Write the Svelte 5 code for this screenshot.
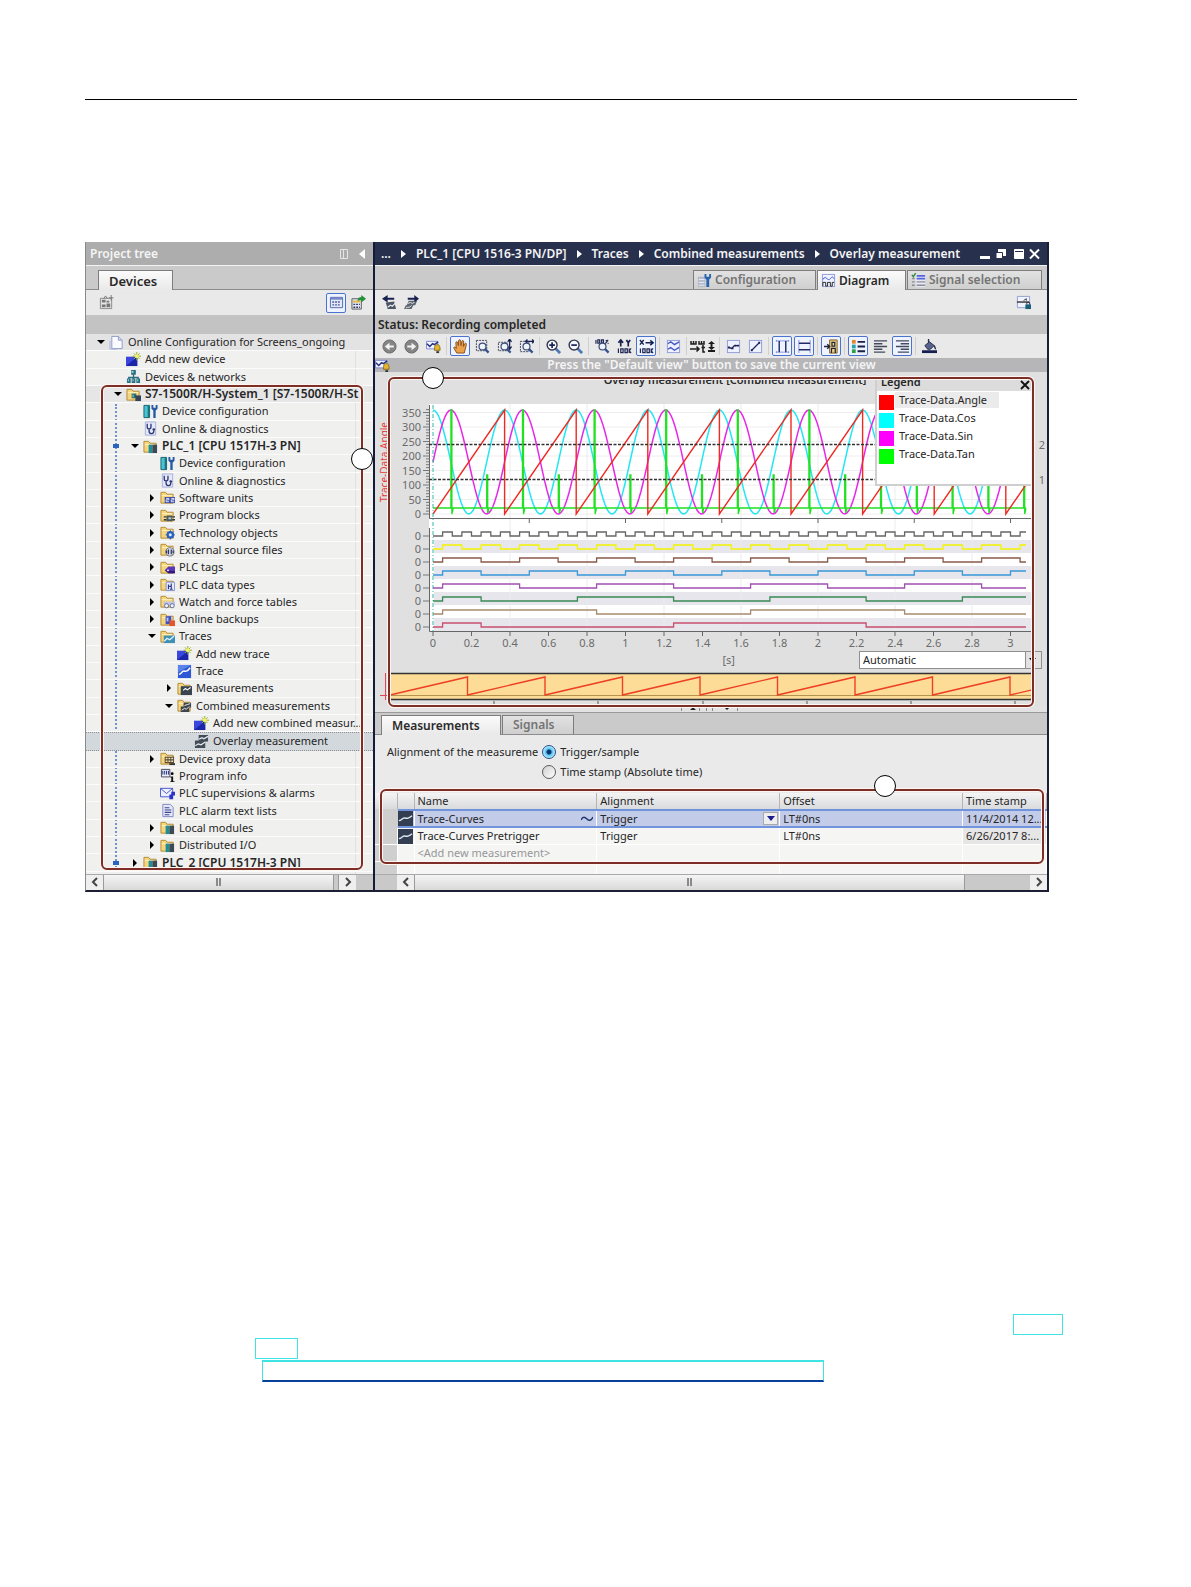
<script>
    let alignment = 'trigger';
    let selectedRow = 'Overlay measurement';
    let range = 'Automatic';

    const folder = '<path d="M1 2.5h5l1.500 2H14V14H1z" fill="#f6d67c" stroke="#b28a35"/><path d="M2 6h11" stroke="#fff3c4"/>';
    const wave = '<path d="M6.500 10l2.500-2 2 1.500L14.500 7" fill="none" stroke="#fff" stroke-width="1.200"/>';
    const lens = '<path d="M10.500 10.500l4 4" stroke="#35538c" stroke-width="2.400"/><circle cx="8" cy="8" r="3.700" fill="#eef4fb" stroke="#3c4d77" stroke-width="1.300"/>';
    const frame = '<rect x="1.500" y="1.500" width="13" height="13" fill="#eef1ff" stroke="#8f9cd8"/>';

    const icons = {
        project: '<path d="M3 1.500h7l4 4v9H3z" fill="#fafbff" stroke="#8b97c9"/><path d="M10 1.500v4h4" fill="#cfd7f5" stroke="#8b97c9"/><path d="M1 6v9h8" fill="none" stroke="#a8b2dc"/>',
        add: '<path d="M0 5h12v10H0z" fill="#3a46dc"/><path d="M0 15L12 5v10z" fill="#1a25a8"/><path d="M11.500 0v9M7 4.500h9M8.500 1.500l6 6M14.500 1.500l-6 6" stroke="#8fae1c"/><circle cx="11.500" cy="4.500" r="2" fill="#f4f06a"/>',
        network: '<path d="M8 5v4M3 12V9h10v3M8 9v3" fill="none" stroke="#2d6f7e" stroke-width="1.500"/><path d="M5.500 1h5v5h-5zM1 10h4v5H1zM6 10h4v5H6zM11 10h4v5h-4z" fill="#2c7181"/><path d="M6 2h2v2H6zM2 11h1v2H2zM7 11h1v2H7zM12 11h1v2h-1z" fill="#9fdce6"/>',
        system: folder + '<path d="M6 7h5v5H6z" fill="#2b6d74"/><path d="M10 9h6v6h-6z" fill="#344356"/><path d="M7 8h1v3H7z" fill="#8fe0e6"/>',
        config: '<path d="M1 1.500h6v13H1z" fill="#47c3d2" stroke="#17616d"/><path d="M5 2h2v12H5z" fill="#1b7382"/><path d="M9 1v4l2 2v8h2.500V7L15.500 5V1h-2v3h-2.500V1z" fill="#2758a4"/>',
        diag: '<path d="M2.500 1h11v14h-11z" fill="#e4e8fa" stroke="#a6afd8"/><path d="M4.500 3v3.500a2 2 0 004 0V3M6.500 8.500V11a2.500 2.500 0 005 0v-1" fill="none" stroke="#2c3672" stroke-width="1.400"/><circle cx="11.500" cy="9" r="1.400" fill="#2c3672"/>',
        plc: folder + '<path d="M6 6h4v9H6z" fill="#1c8f9b"/><path d="M10 6h5v9h-5z" fill="#3d4a55"/>',
        units: folder + '<path d="M5 7.500h11V14H5z" fill="#3e4ea8"/><path d="M6.500 9h3v1.500h-3v2h3M12 9h3v1.500h-3v2h3" fill="none" stroke="#dfe5ff"/>',
        blocks: folder + '<path d="M7 8h6v6H7z" fill="#47585f"/><path d="M4 9.500h3M4 12.500h3M13 9.500h3M13 12.500h3" stroke="#2e3b40" stroke-width="1.500"/><path d="M9 10h3v2H9z" fill="#c0d2d6"/>',
        tech: folder + '<circle cx="11" cy="10.500" r="3" fill="#7fb1ee" stroke="#2b5fc0" stroke-width="2"/><path d="M11 5.500v10M6 10.500h10M7.500 7l7 7M14.500 7l-7 7" stroke="#2b5fc0"/><circle cx="11" cy="10.500" r="1.500" fill="#e8f1ff"/>',
        source: folder + '<circle cx="10.500" cy="10.500" r="4.500" fill="#d7dceb" stroke="#67708f"/><path d="M9 8v5M12 8v5M7 9v3M14 9v3" stroke="#2c3258" stroke-width="1.300"/>',
        tags: folder + '<path d="M5 11l4-4h7v7H9z" fill="#5a37b8"/><path d="M5 11l4 3h7v-2z" fill="#33197c"/><circle cx="8.500" cy="11" r="1" fill="#fff"/>',
        types: folder + '<path d="M6.500 5.500h9v9h-9z" fill="#e7eafb" stroke="#8590cd"/><path d="M9 8v5M9 10h3M12 7v6M10.500 13h3" stroke="#2b3a8f" stroke-width="1.200"/>',
        watch: folder + '<path d="M4 8h12v4H4z" fill="#bfc5e4"/><circle cx="7" cy="12.500" r="2.200" fill="#eef1ff" stroke="#626a95"/><circle cx="13" cy="12.500" r="2.200" fill="#eef1ff" stroke="#626a95"/>',
        backups: folder + '<path d="M6 4.500h6V13H6z" fill="#3c51cc"/><path d="M7 6h2v4H7z" fill="#b8c4ff"/><path d="M10 9h6v6h-6z" fill="#e4562b"/>',
        traces: folder + '<path d="M4 7h12v8H4z" fill="#3f8fb5"/><path d="M4.500 13l3-3 3 1.500 4.500-4" fill="none" stroke="#d9f3ff" stroke-width="1.500"/>',
        trace: '<path d="M1 1h14v14H1z" fill="#2e57d6"/><path d="M1 1h14L1 9z" fill="#5c82ec"/><path d="M2 11c3 0 3-4 5.500-3.500S11 8 14 4" fill="none" stroke="#fff" stroke-width="1.500"/>',
        measure: folder + '<path d="M4 5.500h12V15H4z" fill="#39444f"/>' + wave,
        combined: folder + '<path d="M7 5h8v5H7zM4 9h9v6H4z" fill="#3d4650"/><path d="M5 13l3-2 2 1 3-3M8 8l3-1 3-1" fill="none" stroke="#f2f2f2"/>',
        overlay: '<path d="M5 1h10v7H5zM1 7h11v8H1z" fill="#434d57"/><path d="M1.500 12.500l3-2 3 1L12 8.500M5.500 5.500l3-1.500 2 1L15 2.500" fill="none" stroke="#e6ebef" stroke-width="1.300"/>',
        curve: '<path d="M0 0h16v16H0z" fill="#333e52"/><path d="M1 10c3 1 3-3 6-2.500S11 8 15 5" fill="none" stroke="#dfe6ee" stroke-width="1.500"/>',
        proxy: folder + '<path d="M5 6h10v7H5z" fill="#5b4a32"/><path d="M6 8h2M9 8h2M12 8h2M6 11h2M9 11h2M12 11h2" stroke="#f1e2b8" stroke-width="1.500"/><path d="M10 13h6v2h-6z" fill="#333"/>',
        info: '<path d="M1.500 1.500h9v8h-9z" fill="#e9eefc" stroke="#445"/><path d="M3 3v4M5 3v4M7 3v4M9 3v4" stroke="#1c2b7a"/><circle cx="13" cy="6" r="1.500"/><path d="M11 9h3v5h1.500v1H11v-1h1v-4h-1z" fill="#111"/>',
        alarms: '<path d="M.5 2.500h13v9H.5z" fill="#eef1ff" stroke="#4653cf"/><path d="M.5 2.500L7 8l6.500-5.500" fill="none" stroke="#4653cf"/><path d="M12 6h4v4h-4zM10 9h4v5h-4z" fill="#2733c9"/>',
        textlist: '<path d="M3 1.500h8l3 3v10H3z" fill="#e4e8fb" stroke="#7d88c6"/><path d="M5 5h5M5 7.500h7M5 10h7M5 12.500h5" stroke="#3a4387" stroke-width="1.200"/>',
        sheet: '<path d="M1.500 3.500h12v11h-12z" fill="#e8e8e8" stroke="#868686"/><path d="M3 5h4v3H3zM8 9h4v4H8zM3 10h4v3H3zM8 6h3v2H8z" fill="#777"/><path d="M5 4l2-3 2 3M13 0v6M10.500 3h5" fill="none" stroke="#777"/>',
        grid: '<path d="M1.500 2.500h13v11h-13z" fill="#e3e8fb" stroke="#5468ac"/><path d="M2 4h12" stroke="#7488ca" stroke-width="2"/><path d="M3.500 7.500h9M3.500 10.500h9" stroke="#4d5c94" stroke-width="1.500" stroke-dasharray="2 1"/>',
        gridOut: '<path d="M1 4h10v11H1z" fill="#e9e9f3" stroke="#555"/><path d="M2 7h8" stroke="#e5b43f" stroke-width="2"/><path d="M2.500 10h7M2.500 13h7" stroke="#2b3c6e" stroke-width="1.500" stroke-dasharray="2 1"/><path d="M7 6c0-3 2-4 4-4V0l5 4-5 4V5.500C9 5.500 8 6 7 6z" fill="#26913a"/>',
        importT: '<path d="M4 8l9-1 2 8H6z" fill="#4b5563"/><path d="M6 13l3-2 2 1 3-3" fill="none" stroke="#e6ebef" stroke-width="1.300"/><path d="M13 5V3H6V0L0 4l6 4V5z" fill="#18214f"/>',
        exportT: '<path d="M5 6h9l-2 5H3zM2 11h8l-2 4H0z" fill="#5b6470"/><path d="M4 9l3-1 2 1 3-2M2 14l2-1 2 0 2-2" fill="none" stroke="#eee"/><path d="M4 5V3h7V0l5 4-5 4V5z" fill="#18214f"/>',
        layout: '<path d="M1.500 1.500h13v12h-13z" fill="#f1f4ff" stroke="#8d9ed2"/><path d="M1 7.500h13" stroke="#333" stroke-width="1.500"/><path d="M8 6l3-2v2" stroke="#333" fill="none"/><path d="M10 10h6v5h-6z" fill="#19607d"/><path d="M11.500 10V8h3v2" fill="none" stroke="#333"/>',
        tabConfig: '<path d="M1 4h8v11H1z" fill="#b3bac5"/><path d="M2 7h6M2 10h6M2 13h6" stroke="#eef"/><path d="M8 1v4l2 2v8h3V7l2-2V1h-2v3h-3V1z" fill="#2764b0"/>',
        tabDiagram: frame + '<path d="M2 7c3-6 5 3 8-1s3 0 4 0" fill="none" stroke="#3c4fd0"/><path d="M2 14V10h3v4h2v-4h3v4h2v-4h2" fill="none" stroke="#222"/>',
        tabSignal: '<path d="M5 2h10v13H5z" fill="#e8e8f4"/><path d="M6 3h9M6 6h9" stroke="#5563dd" stroke-width="2"/><path d="M6 9.500h9M6 13h9M1 6h3M1 9.500h3M1 13h3" stroke="#8c8c94" stroke-width="1.500"/><path d="M1 2l1.500 2L5 0" fill="none" stroke="#2f8b3a" stroke-width="1.500"/>',
        back: '<circle cx="8" cy="8" r="7" fill="#858585" stroke="#6a6a6a"/><path d="M12.500 7v2H8v3L3 8l5-4v3z" fill="#f4f4f4"/>',
        forward: '<circle cx="8" cy="8" r="7" fill="#858585" stroke="#6a6a6a"/><path d="M3.500 7v2H8v3l5-4-5-4v3z" fill="#f4f4f4"/>',
        defaultView: '<path d="M.5 2.500h12v8H.5z" fill="#f2f4ff" stroke="#7b8ad8"/><path d="M1 5l3 3 3-3 2 1 4-3" fill="none" stroke="#26327c" stroke-width="1.600"/><path d="M9 12c0-5 1-6 3-6s3 1 3 6z" fill="#e6b62e" stroke="#8a6a14"/><path d="M11 13h3v2h-3z" fill="#333"/>',
        hand: '<path d="M4 15L.8 9.500c0-1.500 1.500-1.500 2.700.5L3 4c0-1.500 1.800-1.500 2 0l.7 3L6 2c0-1.600 2-1.600 2.200 0l.3 5 1-4.500c.4-1.500 2-1 1.900.4L11 8l1.500-3c.8-1.200 2.200-.4 1.800.9L12 15z" fill="#eba14a" stroke="#7b4312" stroke-width=".9"/>',
        zoomSel: '<path d="M1.500 1.500h11v11h-11z" fill="none" stroke="#3a3f5c" stroke-dasharray="2 1"/>' + lens,
        zoomY: '<path d="M1.500 3.500h9v9h-9z" fill="none" stroke="#3a3f5c" stroke-dasharray="2 1"/><path d="M13.500 0v11M11.500 3l2-3 2 3M11.500 8l2 3 2-3" fill="none" stroke="#18214f" stroke-width="1.300"/>' + lens,
        zoomX: '<path d="M1.500 2.500h9v11h-9z" fill="none" stroke="#3a3f5c" stroke-dasharray="2 1"/><path d="M7 2.500h9M9 .5l-2 2 2 2M14 .5l2 2-2 2" fill="none" stroke="#18214f" stroke-width="1.300"/>' + lens,
        zoomIn: '<path d="M10 10l5 5" stroke="#4c79b5" stroke-width="3"/><circle cx="6.500" cy="6.500" r="5.300" fill="#f5f8ff" stroke="#33384f" stroke-width="1.500"/><path d="M3.500 6.500h6M6.500 3.500v6" stroke="#1a2050" stroke-width="1.800"/>',
        zoomOut: '<path d="M10 10l5 5" stroke="#4c79b5" stroke-width="3"/><circle cx="6.500" cy="6.500" r="5.300" fill="#f5f8ff" stroke="#33384f" stroke-width="1.500"/><path d="M3.500 6.500h6" stroke="#1a2050" stroke-width="1.800"/>',
        zoomAll: '<path d="M1 1v4M3 1h2v3.500H3zM7 1h2v3.500H7zM11 5l3-4M12 1v1M14 4v1" fill="none" stroke="#222a55" stroke-width="1.300"/>' + lens,
        scaleY: '<path d="M4 8V1M1.500 4L4 1l2.500 3M10 1l2 3 2-3M12 4v4" fill="none" stroke="#18214f" stroke-width="1.800"/><path d="M1.500 10v5M4 10.500h2.500v4H4zM8.500 10.500H11v4H8.500zM13 10v5M15 10l-2 2.500 2 2.500" fill="none" stroke="#222a55" stroke-width="1.300"/>',
        scaleX: '<path d="M1 1l4 5M5 1L1 6M7 4h8M12 1.500L15 4l-3 2.500" fill="none" stroke="#18214f" stroke-width="1.500"/><path d="M1.500 10v5M4 10.500h2.500v4H4zM8.500 10.500H11v4H8.500zM13 10v5M15 10l-2 2.500 2 2.500" fill="none" stroke="#222a55" stroke-width="1.300"/>',
        waves: frame + '<path d="M2 5l3-2 4 3 5-3M2 11l3-2 4 3 5-3" fill="none" stroke="#4355c5" stroke-width="1.400"/>',
        points: frame + '<path d="M3 9l3 1 3-3 4 0" fill="none" stroke="#1c2458" stroke-width="1.400"/><path d="M2 8h2v2H2zM6 9h2v2H6zM9 6h2v2H9zM12 6h2v2h-2z" fill="#1c2458"/>',
        line: frame + '<path d="M4 12l8-8" stroke="#1c2458" stroke-width="1.400"/><path d="M3 11h2v2H3zM11 3h2v2h-2z" fill="#1c2458"/>',
        vert: '<path d="M1 2h14M1 14h14" stroke="#8893d8"/><path d="M4.500 2v12M11.500 2v12" stroke="#1f2a66" stroke-width="1.500"/><path d="M1.500 1v2M14.500 1v2M1.500 13v2M14.500 13v2" stroke="#8893d8"/>',
        horiz: '<path d="M2 1v14M14 1v14" stroke="#8893d8"/><path d="M2 4.500h12M2 11.500h12" stroke="#1f2a66" stroke-width="1.500"/>',
        cursors: '<path d="M6 1h8v14H6z" fill="#ead08a" stroke="#7c5c1c"/><path d="M8.500 3.500h3v4h-3zM8 15v-5h4v5" fill="none" stroke="#20243f" stroke-width="1.300"/><path d="M0 8h6M3.500 5.500L6 8l-2.500 2.500" fill="none" stroke="#20243f" stroke-width="1.500"/>',
        legend: '<path d="M1 1h4v4H1z" fill="#e2872a"/><path d="M1 6h4v4H1z" fill="#26a3a8"/><path d="M1 11h4v4H1z" fill="#2d9e45"/><path d="M7 3h8M7 8h8M7 13h8" stroke="#1a2146" stroke-width="2"/>',
        left: '<path d="M1 2h14M1 5h9M1 8h14M1 11h9M1 14h12" stroke="#444a5e" stroke-width="1.500"/>',
        right: '<path d="M1 2h14M6 5h9M1 8h14M6 11h9M3 14h12" stroke="#444a5e" stroke-width="1.500"/>',
        fill: '<path d="M0 12h16v3H0z" fill="#17204e"/><path d="M3 7l5-4 5 4-4 4H6z" fill="#59628a" stroke="#2a3050"/><path d="M7 4V0M13 7l1.500 4" stroke="#2a3050" stroke-width="1.500"/>',
    };

    const tree = [
        { text: 'Online Configuration for Screens_ongoing', level: 0, icon: 'project', open: true, top: true },
        { text: 'Add new device', level: 1, icon: 'add' },
        { text: 'Devices & networks', level: 1, icon: 'network' },
        { text: 'S7-1500R/H-System_1 [S7-1500R/H-St', level: 1, icon: 'system', open: true, bold: true },
        { text: 'Device configuration', level: 2, icon: 'config' },
        { text: 'Online & diagnostics', level: 2, icon: 'diag' },
        { text: 'PLC_1 [CPU 1517H-3 PN]', level: 2, icon: 'plc', open: true, bold: true, online: true },
        { text: 'Device configuration', level: 3, icon: 'config' },
        { text: 'Online & diagnostics', level: 3, icon: 'diag' },
        { text: 'Software units', level: 3, icon: 'units', open: false },
        { text: 'Program blocks', level: 3, icon: 'blocks', open: false },
        { text: 'Technology objects', level: 3, icon: 'tech', open: false },
        { text: 'External source files', level: 3, icon: 'source', open: false },
        { text: 'PLC tags', level: 3, icon: 'tags', open: false },
        { text: 'PLC data types', level: 3, icon: 'types', open: false },
        { text: 'Watch and force tables', level: 3, icon: 'watch', open: false },
        { text: 'Online backups', level: 3, icon: 'backups', open: false },
        { text: 'Traces', level: 3, icon: 'traces', open: true },
        { text: 'Add new trace', level: 4, icon: 'add' },
        { text: 'Trace', level: 4, icon: 'trace' },
        { text: 'Measurements', level: 4, icon: 'measure', open: false },
        { text: 'Combined measurements', level: 4, icon: 'combined', open: true },
        { text: 'Add new combined measur...', level: 5, icon: 'add' },
        { text: 'Overlay measurement', level: 5, icon: 'overlay' },
        { text: 'Device proxy data', level: 3, icon: 'proxy', open: false },
        { text: 'Program info', level: 3, icon: 'info' },
        { text: 'PLC supervisions & alarms', level: 3, icon: 'alarms' },
        { text: 'PLC alarm text lists', level: 3, icon: 'textlist' },
        { text: 'Local modules', level: 3, icon: 'plc', open: false },
        { text: 'Distributed I/O', level: 3, icon: 'plc', open: false },
        { text: 'PLC_2 [CPU 1517H-3 PN]', level: 2, icon: 'plc', open: false, bold: true, online: true },
    ];

    // a group is drawn between two separators
    const tools = [
        [{ icon: 'back' }, { icon: 'forward' }, { icon: 'defaultView' }],
        [{ icon: 'hand', on: true }, { icon: 'zoomSel' }, { icon: 'zoomY' }, { icon: 'zoomX' }],
        [{ icon: 'zoomIn' }, { icon: 'zoomOut' }],
        [{ icon: 'zoomAll' }, { icon: 'scaleY' }, { icon: 'scaleX', on: true }],
        [{ icon: 'waves' }],
        [{ icon: 'timeScale' }],
        [{ icon: 'points' }, { icon: 'line' }],
        [{ icon: 'vert', on: true }, { icon: 'horiz', on: true }],
        [{ icon: 'cursors', on: true }],
        [{ icon: 'legend', on: true }, { icon: 'left' }, { icon: 'right', on: true }],
        [{ icon: 'fill' }],
    ];

    const path = ['...', 'PLC_1 [CPU 1516-3 PN/DP]', 'Traces', 'Combined measurements', 'Overlay measurement'];

    const legend = [
        { name: 'Trace-Data.Angle', color: '#ff0000' },
        { name: 'Trace-Data.Cos', color: '#00ffff' },
        { name: 'Trace-Data.Sin', color: '#ff00ff' },
        { name: 'Trace-Data.Tan', color: '#00ff00' },
    ];

    const rows = [
        { name: 'Trace-Curves', offset: 'LT#0ns', stamp: '11/4/2014 12...' },
        { name: 'Trace-Curves Pretrigger', offset: 'LT#0ns', stamp: '6/26/2017 8:...' },
    ];

    // chart geometry
    const x0 = 433;
    const xEnd = 1026;
    const y0 = 514;
    const yTop = 410;
    const period = 71.6;
    const sx = (s) => x0 + s * 192.5;
    const sy = (v) => y0 - v * 0.29;

    const yTicks = [0, 50, 100, 150, 200, 250, 300, 350];
    const minor = Array.from({ length: 37 }, (_, i) => i * 10);
    const xTicks = Array.from({ length: 16 }, (_, i) => i / 5);
    const periods = Array.from({ length: 9 }, (_, i) => i);

    function sine(phase) {
        const mid = (y0 + yTop) / 2;
        const amp = (y0 - yTop) / 2;
        let d = '';
        for (let x = x0; x <= xEnd; x += 2) {
            const y = mid - amp * Math.sin(((x - x0) / period) * 2 * Math.PI + phase);
            d += `${d ? 'L' : 'M'}${x} ${y.toFixed(1)}`;
        }
        return d;
    }

    function saw(start, step, end, low, high) {
        let d = `M${start} ${low}`;
        let x = start;
        while (x + step < end) {
            x += step;
            d += `L${x} ${high}V${low}`;
        }
        const last = low - ((end - x) / step) * (low - high);
        return d + `L${end} ${last}`;
    }

    function tan() {
        const base = 508;
        let d = `M${x0} ${base}`;
        for (const p of periods) {
            const a = x0 + p * period + period / 4;
            const b = a + period / 2;
            if (a < xEnd) d += `H${a}V${yTop}h1V${y0}L${a + 2} ${base + 2}V${base}`;
            if (b < xEnd) d += `H${b}V475h1V${y0 - 1}L${b + 2} ${base + 2}V${base}`;
        }
        return d + `H${xEnd}`;
    }

    const every = (step) => {
        const times = [];
        for (let t = 0.05; t < 3.07; t += step) times.push(t);
        return times;
    };

    const bits = [
        { color: '#666666', times: every(0.05) },
        { color: '#f4f400', times: every(0.1) },
        { color: '#8a5a4a', times: every(0.2) },
        { color: '#3a98d8', times: [0.05, 0.25, 0.5, 0.75, 1, 1.25, 1.5, 1.75, 2, 2.25, 2.5, 2.75, 3] },
        { color: '#a050b0', times: every(0.4) },
        { color: '#3a8a55', times: [0.05, 0.25, 0.75, 1.25, 1.75, 2.25, 2.75] },
        { color: '#a88a6c', times: every(0.8) },
        { color: '#c8506e', times: [0.05, 0.25, 1.25, 2.25] },
    ];

    function bitPath(times, i) {
        const low = 536 + i * 13;
        let d = `M${x0} ${low}`;
        times.forEach((t, n) => {
            d += `H${sx(t).toFixed(1)}V${n % 2 ? low : low - 4}`;
        });
        return d + `H${xEnd}`;
    }
</script>

{#snippet icon(name)}
    <svg class="icon" viewBox="0 0 16 16" aria-hidden="true">{@html icons[name]}</svg>
{/snippet}

{#snippet chevron(dir)}
    <svg class="chevron" viewBox="0 0 8 10" aria-hidden="true">
        <path d={dir === 'left' ? 'M6 1L2 5l4 4' : 'M2 1l4 4-4 4'} fill="none" stroke="#444" stroke-width="2" />
    </svg>
{/snippet}

<main class="page">
    <hr />

    <div class="window">
        <section class="side">
            <header class="side-title">
                <span>Project tree</span>
                <svg width="28" height="12" viewBox="0 0 28 12" aria-hidden="true">
                    <path d="M1.500 1.500h7v9h-7zM4.500 1.500v9" fill="none" stroke="#e6e6e6" />
                    <path d="M26 1v10l-6-5z" fill="#fff" />
                </svg>
            </header>
            <div class="tabs">
                <button class="tab active devices">Devices</button>
            </div>
            <div class="toolbar side-tools">
                <button class="tool" aria-label="New">{@render icon('sheet')}</button>
                <span class="grow"></span>
                <button class="tool on" aria-label="Details">{@render icon('grid')}</button>
                <button class="tool" aria-label="Overview">{@render icon('gridOut')}</button>
            </div>
            <div class="strip"></div>
            <div class="tree-wrap">
                <ul class="tree">
                    {#each tree as node}
                        <li
                            class:top={node.top}
                            class:bold={node.bold}
                            class:shade={node.icon === 'system'}
                            class:selected={node.text === selectedRow}
                            style="padding-left: {9 + node.level * 17}px"
                        >
                            {#if node.online}<i class="online"></i>{/if}
                            <span class="toggle">
                                {#if node.open === true}
                                    <svg width="8" height="8" viewBox="0 0 8 8"><path d="M0 2h8L4 6z" /></svg>
                                {:else if node.open === false}
                                    <svg width="8" height="8" viewBox="0 0 8 8"><path d="M2 0v8l4-4z" /></svg>
                                {/if}
                            </span>
                            {@render icon(node.icon)}
                            <span class="label">{node.text}</span>
                        </li>
                    {/each}
                </ul>
                <div class="mark tree-mark"></div>
                <div class="callout tree-callout"></div>
            </div>
            <div class="scroll side-scroll">
                <button aria-label="Scroll left">{@render chevron('left')}</button>
                <div class="thumb"><i></i></div>
                <div class="grip"></div>
                <button aria-label="Scroll right">{@render chevron('right')}</button>
                <div class="corner"></div>
            </div>
        </section>

        <section class="editor">
            <header class="editor-title">
                <nav>
                    {#each path as part, i}
                        {#if i > 0}<svg width="5" height="8" viewBox="0 0 5 8" aria-hidden="true"><path d="M0 0l5 4-5 4z" fill="#fff" /></svg>{/if}
                        <span>{part}</span>
                    {/each}
                </nav>
                <svg class="win" width="62" height="12" viewBox="0 0 62 12" aria-hidden="true">
                    <path d="M1 8h10v3H1z" fill="#fff" />
                    <path d="M19 1h8v7h-8z" fill="#fff" /><path d="M17 4.500h6.500v6H17z" fill="#fff" stroke="#27304d" />
                    <path d="M35.500 1.500h9v9h-9z" fill="#fff" stroke="#fff" /><path d="M36 3.500h8" stroke="#27304d" />
                    <path d="M51 1.500l9 9M60 1.500l-9 9" stroke="#fff" stroke-width="2" />
                </svg>
            </header>
            <div class="tabs end">
                <button class="tab config">{@render icon('tabConfig')}Configuration</button>
                <button class="tab active diagram">{@render icon('tabDiagram')}Diagram</button>
                <button class="tab signal">{@render icon('tabSignal')}Signal selection</button>
            </div>
            <div class="toolbar actions">
                <button class="tool" aria-label="Import">{@render icon('importT')}</button>
                <button class="tool" aria-label="Export">{@render icon('exportT')}</button>
                <span class="grow"></span>
                <button class="tool" aria-label="Layout">{@render icon('layout')}</button>
            </div>
            <div class="strip status">Status: Recording completed</div>
            <div class="toolbar chart-tools">
                {#each tools as group, i}
                    {#if i > 0}<i class="sep"></i>{/if}
                    {#each group as tool}
                        {#if tool.icon === 'timeScale'}
                            <button class="tool wide" aria-label="timeScale">
                                <svg width="26" height="16" viewBox="0 0 26 16">
                                    <path d="M1 3v3h2.500V3M3.500 6H6V3M9 3v3h2.500V3M11.500 6H14V3M0 11h9M6.500 8.500L9 11l-2.500 2.500M13 7v7h2M11.500 9.500h3.500" fill="none" stroke="#1b1b1b" stroke-width="1.500" />
                                    <path d="M18 9h7l-3.500 3zM18 12h7v2h-7zM20.500 5h2v4h-2zM18 6l3.500-3L25 6z" fill="#1b1b1b" />
                                </svg>
                            </button>
                        {:else}
                            <button class="tool" class:on={tool.on} aria-label={tool.icon}>{@render icon(tool.icon)}</button>
                        {/if}
                    {/each}
                {/each}
            </div>
            <div class="message">
                {@render icon('defaultView')}
                <span>Press the "Default view" button to save the current view</span>
            </div>

            <div class="diagram-area">
                <svg class="chart" viewBox="375 372 672 278">
                    <rect x="429" y="404" width="602" height="227" fill="#fff" />
                    {#each [540, 566, 592, 618] as y}
                        <rect x="434" {y} width="597" height="13" fill="#e6e6ec" />
                    {/each}
                    {#each yTicks as v}
                        <path d="M430 {sy(v)}H1031" stroke="#eeeeee" />
                    {/each}
                    {#each xTicks as t, i}
                        {#if i % 2 === 0 && i > 0}<path d="M{sx(t)} 404V631" stroke="#ececec" />{/if}
                    {/each}

                    <text class="chart-title" x="735" y="384" text-anchor="middle">Overlay measurement [Combined measurement]</text>
                    <text class="axis-name" transform="translate(388 462) rotate(-90)" text-anchor="middle">Trace-Data.Angle</text>

                    <path d="M429.500 405V518.500H1031M429.500 528V631.500H1031" fill="none" stroke="#666" />
                    {#each minor as v}
                        <path d="M{v % 50 ? 426 : 423} {sy(v)}H429" stroke="#777" />
                    {/each}
                    {#each yTicks as v}
                        <text x="421" y={sy(v) + 4} text-anchor="end">{v}</text>
                    {/each}
                    {#each [0.5, 1, 1.5, 2, 2.5, 3] as t}
                        <path d="M{sx(t)} 519v4" stroke="#666" />
                    {/each}
                    {#each xTicks as t}
                        <path d="M{sx(t)} 632v4" stroke="#666" />
                        <text x={sx(t)} y="647" text-anchor="middle">{t}</text>
                    {/each}

                    <path d={sine(Math.PI / 2)} fill="none" stroke="#22e6f2" stroke-width="1.500" />
                    <path d={sine(0)} fill="none" stroke="#e628e6" stroke-width="1.500" />
                    <path d={tan()} fill="none" stroke="#22e022" stroke-width="1.300" />
                    <path d={saw(x0, period, xEnd, y0, yTop)} fill="none" stroke="#ee2a22" stroke-width="1.400" />
                    <path d="M429 444.500H1031M429 479.500H1031" stroke="#333" stroke-width="1.300" stroke-dasharray="3 1.500" />
                    <path d="M433 405V631" stroke="#35b8a8" stroke-dasharray="4 2 1 2" />
                    <text x="1045" y="449" text-anchor="end">2</text>
                    <text x="1045" y="484" text-anchor="end">1</text>

                    {#each bits as bit, i}
                        <path d="M423 {536 + i * 13}h6" stroke="#777" />
                        <text x="421" y={540 + i * 13} text-anchor="end">0</text>
                        <path d={bitPath(bit.times, i)} fill="none" stroke={bit.color} stroke-width="1.300" />
                    {/each}
                </svg>
                <div class="unit-row">
                    <span class="unit">[s]</span>
                    <select bind:value={range} aria-label="Range">
                        <option>Automatic</option>
                    </select>
                </div>
                <svg class="chart" viewBox="375 670 672 36">
                    <rect x="391" y="673" width="640" height="27" fill="#fddc98" />
                    <path d="M391 673.500H1031M391 699.500H1031" stroke="#333" stroke-width="1.500" />
                    <path d="M391 695.500H1031" stroke="#b5934f" />
                    <path d={saw(390, 77.5, 1031, 695, 677)} fill="none" stroke="#ee4022" stroke-width="1.400" />
                    <path d="M385.500 673V700M380 695.500h9" stroke="#e04455" />
                    {#each [494, 598, 703, 807, 911, 1015] as x}
                        <path d="M{x} 701v3" stroke="#555" />
                    {/each}
                </svg>

                <div class="legend">
                    <div class="legend-title"><b>Legend</b>
                        <button aria-label="Close legend"><svg width="10" height="10" viewBox="0 0 10 10"><path d="M1 1l8 8M9 1L1 9" stroke="#111" stroke-width="1.800" /></svg></button>
                    </div>
                    {#each legend as item, i}
                        <div class="legend-item">
                            <i style="background: {item.color}"></i>
                            <span class:first={i === 0}>{item.name}</span>
                        </div>
                    {/each}
                </div>
                <div class="mark diagram-mark"></div>
                <div class="callout diagram-callout"></div>
            </div>

            <div class="splitter">
                <svg width="60" height="5" viewBox="0 0 60 5" aria-hidden="true">
                    <path d="M.5 0v5M18.500 0v5M25.500 0v5M31.500 0v5M56.500 0v5" stroke="#888" /><path d="M9 4h6l-3-3zM43 1h6l-3 3z" fill="#222" />
                </svg>
            </div>
            <div class="tabs lower">
                <button class="tab active measurements">Measurements</button>
                <button class="tab signals">Signals</button>
            </div>
            <div class="align">
                <span class="align-label">Alignment of the measureme</span>
                <div class="radios">
                    <label><input type="radio" bind:group={alignment} value="trigger" />Trigger/sample</label>
                    <label><input type="radio" bind:group={alignment} value="time" />Time stamp (Absolute time)</label>
                </div>
            </div>

            <div class="table-wrap">
                <table>
                    <colgroup>
                        <col class="c-num" /><col class="c-icon" /><col /><col /><col /><col class="c-stamp" />
                    </colgroup>
                    <thead>
                        <tr><th></th><th></th><th>Name</th><th>Alignment</th><th>Offset</th><th>Time stamp</th></tr>
                    </thead>
                    <tbody>
                        {#each rows as row, i}
                            <tr class:current={i === 0}>
                                <td class="num"></td>
                                <td class="pic">{@render icon('curve')}</td>
                                <td>
                                    <div class="cell">{row.name}
                                        {#if i === 0}<svg width="12" height="6" viewBox="0 0 12 6"><path d="M0 4c2-4 4-3 6-1s4 2 6-2" fill="none" stroke="#26386e" stroke-width="1.500" /></svg>{/if}
                                    </div>
                                </td>
                                <td>
                                    <div class="cell">Trigger
                                        {#if i === 0}<button class="drop" aria-label="Choose alignment"><svg width="8" height="5" viewBox="0 0 8 5"><path d="M0 0h8L4 5z" fill="#1c1c8c" /></svg></button>{/if}
                                    </div>
                                </td>
                                <td>{row.offset}</td>
                                <td class="stamp">{row.stamp}</td>
                            </tr>
                        {/each}
                        <tr class="new"><td class="num"></td><td></td><td>&lt;Add new measurement&gt;</td><td></td><td></td><td></td></tr>
                        <tr class="rest"><td class="num"></td><td></td><td></td><td></td><td></td><td></td></tr>
                    </tbody>
                </table>
                <div class="mark table-mark"></div>
                <div class="callout table-callout"></div>
            </div>
            <div class="scroll editor-scroll">
                <button aria-label="Scroll left">{@render chevron('left')}</button>
                <div class="thumb"><i></i></div>
                <div class="track"></div>
                <button aria-label="Scroll right">{@render chevron('right')}</button>
            </div>
        </section>
    </div>

    <div class="links">
        <a class="link-a" href="#page" aria-label="Page"></a>
        <a class="link-b" href="#chapter" aria-label="Chapter"></a>
        <a class="link-c" href="#support" aria-label="Support"></a>
    </div>
</main>

<style>
    :global(body) {
        background: #fff;
    }
    .page {
        box-sizing: border-box;
        padding: 99px 114px 0 85px;
        font-family: "Noto Sans", "Open Sans", sans-serif;
        font-size: 11px;
        line-height: 16px;
        color: #262626;
    }
    hr {
        margin: 0;
        border: 0;
        border-top: 1px solid #000;
    }
    button {
        padding: 0;
        border: 0;
        background: none;
        font: inherit;
        color: inherit;
    }
    svg {
        display: block;
        flex: none;
    }
    .icon {
        width: 15px;
        height: 15px;
    }
    .grow {
        flex: 1;
    }
    .window {
        box-sizing: border-box;
        display: grid;
        grid-template-columns: 289fr 672fr;
        margin: 142px 28px 0 0;
        border: solid #1c1f33;
        border-width: 0 2px 2px 0;
        border-left: 1px solid #8a8a8a;
        white-space: nowrap;
    }
    .side {
        display: flex;
        flex-direction: column;
        min-width: 0;
        border-right: 2px solid #15193a;
        background: #f0f0ef;
    }
    .editor {
        display: flex;
        flex-direction: column;
        min-width: 0;
        background: #eaeaea;
    }
    .side-title,
    .editor-title {
        display: flex;
        align-items: center;
        justify-content: space-between;
        height: 23px;
        border-bottom: 1px solid #f4f4f4;
        font-size: 12px;
        font-weight: 600;
        color: #f4f4f4;
    }
    .side-title {
        padding: 0 6px 0 4px;
        background: #adadad;
    }
    .editor-title {
        padding: 0 6px;
        background: #27304d;
    }
    nav {
        display: flex;
        align-items: center;
        gap: 10px;
    }

    .tabs {
        box-sizing: border-box;
        display: flex;
        align-items: flex-end;
        height: 24px;
        border-bottom: 1px solid #8c8c8c;
        background: #cacaca;
    }
    .tabs.end {
        justify-content: flex-end;
        gap: 1px;
        padding-right: 5px;
    }
    .tab {
        box-sizing: border-box;
        display: flex;
        align-items: center;
        gap: 3px;
        height: 19px;
        padding: 0 3px;
        border: 1px solid #7d7d7d;
        border-bottom: 0;
        background: linear-gradient(#e2e2e2, #cfcfcf);
        font-size: 12px;
        font-weight: 600;
        color: #747474;
    }
    .tab.active {
        height: 20px;
        margin-bottom: -1px;
        background: linear-gradient(#fbfbfb, #e9e9e9);
        color: #2a2a2a;
    }
    .tab.devices {
        margin-left: 12px;
        padding: 0 15px 0 10px;
        font-size: 13px;
    }
    .config {
        width: 123px;
    }
    .diagram {
        width: 89px;
    }
    .signal {
        width: 135px;
    }
    .tabs.lower {
        height: 22px;
        padding-left: 6px;
        gap: 1px;
    }
    .measurements {
        width: 120px;
        padding-left: 10px;
    }
    .signals {
        width: 72px;
        padding-left: 10px;
    }

    .toolbar {
        display: flex;
        align-items: center;
        gap: 2px;
        height: 25px;
        background: #e9e9e9;
    }
    .side-tools {
        padding: 0 5px 0 10px;
    }
    .actions {
        padding: 0 14px 0 4px;
    }
    .chart-tools {
        height: 24px;
        padding-left: 4px;
    }
    .tool {
        box-sizing: border-box;
        display: flex;
        align-items: center;
        justify-content: center;
        width: 20px;
        height: 20px;
        flex: none;
    }
    .tool.on {
        border: 1px solid #4a73d0;
        border-radius: 2px;
        background: #eef3ff;
    }
    .tool.wide {
        width: 26px;
    }
    .sep {
        width: 1px;
        height: 18px;
        margin: 0 1px;
        background: #d0d0d0;
    }
    .strip {
        height: 19px;
        background: #c3c3c3;
    }
    .status {
        padding-left: 3px;
        font-size: 12px;
        font-weight: 600;
        line-height: 19px;
    }
    .message {
        display: flex;
        align-items: center;
        height: 14px;
        padding-right: 14px;
        background: #b6b6b8;
        font-size: 12px;
        font-weight: 600;
        color: #f4f4f4;
    }
    .message span {
        flex: 1;
        text-align: center;
    }

    .tree-wrap {
        position: relative;
        display: flex;
        flex: 1;
        min-height: 0;
    }
    .tree {
        display: flex;
        flex: 1;
        flex-direction: column;
        min-width: 0;
        margin: 0;
        padding: 0 0 2px;
        list-style: none;
        background: linear-gradient(90deg, transparent 269px, #e0e0e0 269px, #e0e0e0 270px, transparent 270px), #f0f0ef;
    }
    .tree::before {
        content: "";
        position: absolute;
        top: 70px;
        bottom: 6px;
        left: 29px;
        border-left: 2px dotted #6f93c9;
    }
    li {
        position: relative;
        box-sizing: border-box;
        display: flex;
        flex: 1;
        align-items: center;
        min-height: 0;
        border-bottom: 1px solid #fbfbfb;
    }
    .top {
        background: #e3e3e3;
    }
    .shade {
        background: #e6e6e6;
    }
    .bold {
        font-size: 12px;
        font-weight: 600;
    }
    .selected {
        border: 1px dotted #8c8f92;
        border-width: 1px 0;
        background: #d3d8dc;
    }
    .toggle {
        width: 12px;
        padding-left: 2px;
    }
    .label {
        margin-left: 4px;
    }
    .online {
        position: absolute;
        left: 27px;
        width: 6px;
        height: 4px;
        background: #2a62bd;
    }

    .scroll {
        display: flex;
        height: 16px;
        border-top: 1px solid #a9a9a9;
        background: #c9c9c9;
        box-sizing: border-box;
    }
    .scroll button {
        display: flex;
        align-items: center;
        justify-content: center;
        width: 17px;
        background: #efefef;
    }
    .chevron {
        width: 8px;
        height: 10px;
    }
    .thumb {
        display: flex;
        flex: 1;
        align-items: center;
        justify-content: center;
        border: 1px solid #9a9a9a;
        border-width: 0 1px;
        background: linear-gradient(#f5f5f5, #d9d9d9);
    }
    .thumb i {
        width: 1px;
        height: 8px;
        border: 2px solid #8a8a8a;
        border-width: 0 2px;
    }
    .grip {
        width: 4px;
        border-right: 1px solid #9a9a9a;
    }
    .corner {
        width: 17px;
    }
    .editor-scroll {
        padding-left: 22px;
    }
    .track {
        width: 65px;
    }

    .diagram-area {
        position: relative;
        background: #e0e0e1;
    }
    .chart {
        width: 100%;
        height: auto;
    }
    .chart text {
        font-size: 11px;
        fill: #6b6b6b;
    }
    .chart .chart-title {
        font-weight: 600;
        fill: #2a2a2a;
    }
    .chart .axis-name {
        fill: #e83a3a;
        font-size: 10px;
    }
    .unit-row {
        display: flex;
        align-items: center;
        justify-content: flex-end;
        gap: 124px;
        height: 20px;
        padding-right: 5px;
        color: #6b6b6b;
    }
    select {
        width: 183px;
        height: 18px;
        padding: 0 3px;
        border: 1px solid #8f8f8f;
        border-radius: 0;
        appearance: none;
        background: url("data:image/svg+xml,%3Csvg xmlns='http://www.w3.org/2000/svg' width='16' height='16'%3E%3Cpath d='M0 0h16v16H0z' fill='%23e2e2e2'/%3E%3Cpath d='M.5 0v16' stroke='%238f8f8f'/%3E%3Cpath d='M4 6h7l-3.500 4z'/%3E%3C/svg%3E") right center no-repeat #fff;
        font: inherit;
        color: #262626;
    }
    .legend {
        position: absolute;
        top: 4px;
        right: 16px;
        box-sizing: border-box;
        width: 156px;
        height: 110px;
        border-bottom: 2px solid #cfcfcf;
        border-left: 2px solid #cfcfcf;
        background: #fff;
        color: #262626;
    }
    .legend-title {
        display: flex;
        align-items: center;
        justify-content: space-between;
        height: 15px;
        margin-bottom: 2px;
        padding: 0 1px 0 4px;
        background: #dcdcdc;
    }
    .legend-title b {
        height: 14px;
        font-weight: 600;
        line-height: 10px;
    }
    .legend-title button {
        margin-top: 2px;
    }
    .legend-item {
        display: flex;
        align-items: center;
        gap: 1px;
        height: 18px;
        padding-left: 2px;
    }
    .legend-item i {
        width: 15px;
        height: 15px;
    }
    .legend-item span {
        margin-bottom: 4px;
        padding: 0 12px 0 4px;
    }
    .legend-item .first {
        background: #ebebeb;
    }

    /* annotations */
    .mark {
        position: absolute;
        box-sizing: border-box;
        border: 2px solid #7d2e26;
        border-radius: 6px;
        box-shadow: 0 0 0 1px #fff6f2, inset 0 0 0 1px #fff6f2;
        pointer-events: none;
    }
    .callout {
        position: absolute;
        box-sizing: border-box;
        width: 22px;
        height: 22px;
        border: 1px solid #000;
        border-radius: 50%;
        background: #fff;
    }
    .tree-mark {
        top: 51px;
        right: 10px;
        bottom: 4px;
        left: 15px;
    }
    .tree-callout {
        top: 114px;
        right: 0;
    }
    .diagram-mark {
        top: 5px;
        right: 13px;
        bottom: -1px;
        left: 13px;
    }
    .diagram-callout {
        top: -5px;
        left: 47px;
    }
    .table-mark {
        top: -4px;
        right: 3px;
        bottom: 10px;
        left: 5px;
    }
    .table-callout {
        top: -18px;
        right: 151px;
    }

    .splitter {
        display: flex;
        justify-content: center;
        height: 6px;
        border-bottom: 1px solid #9a9a9a;
        background: #e2e2e2;
    }
    .align {
        display: flex;
        gap: 4px;
        height: 51px;
        padding: 7px 0 0 12px;
    }
    .align-label {
        min-width: 150px;
        padding-top: 2px;
    }
    .radios {
        display: flex;
        flex-direction: column;
    }
    label {
        display: flex;
        align-items: center;
        gap: 4px;
        height: 20px;
    }
    input {
        width: 14px;
        height: 14px;
        margin: 0;
        border: 1px solid #5c5c5c;
        border-radius: 50%;
        appearance: none;
        background: linear-gradient(135deg, #cfcfcf, #fff);
    }
    input:checked {
        border-color: #1d4f86;
        background: radial-gradient(circle, #12306e 0 2px, #4fc4f2 3px, #bfeaff 6px);
    }

    .table-wrap {
        position: relative;
    }
    table {
        width: 100%;
        border-collapse: collapse;
        table-layout: fixed;
        background: #f5f5f4;
    }
    .c-num {
        width: 22px;
    }
    .c-icon {
        width: 17px;
    }
    .c-stamp {
        width: 84px;
    }
    th,
    td {
        height: 17px;
        padding: 0 3px;
        overflow: hidden;
        box-sizing: border-box;
        border-right: 1px solid #fff;
        text-align: left;
        font-weight: 400;
    }
    th {
        border-right-color: #b5b5b5;
        background: linear-gradient(#f4f4f4, #d9dadc);
    }
    td {
        border-bottom: 1px solid #fff;
    }
    .num {
        background: #cfcfcf;
    }
    .pic {
        padding: 0;
    }
    .current td {
        height: 17px;
        border-top: 2px solid #6f93dc;
        border-bottom: 2px solid #6f93dc;
        background: #c2cbe8;
        line-height: 13px;
    }
    .current .num {
        border-color: #cfcfcf;
        background: #cfcfcf;
    }
    .cell {
        display: flex;
        align-items: center;
        justify-content: space-between;
    }
    .drop {
        display: flex;
        align-items: center;
        justify-content: center;
        width: 15px;
        height: 13px;
        margin-right: -2px;
        border: 1px solid #aaa;
        background: #eee;
    }
    .stamp {
        background: #e6e6e6;
    }
    .new td {
        color: #979797;
    }
    .rest td {
        height: 12px;
        border-bottom: 0;
    }

    .links {
        display: flex;
        flex-direction: column;
        margin-top: 422px;
    }
    .links a {
        box-sizing: border-box;
        height: 21px;
        border: 1px solid #3fe3e3;
    }
    .link-a {
        align-self: flex-end;
        width: 50px;
        margin-right: 14px;
    }
    .link-b {
        width: 43px;
        margin: 3px 0 1px 170px;
    }
    .links .link-c {
        height: 22px;
        margin: 0 253px 0 177px;
        border-top-width: 2px;
        border-bottom: 2px solid #0b3f9c;
    }
</style>
